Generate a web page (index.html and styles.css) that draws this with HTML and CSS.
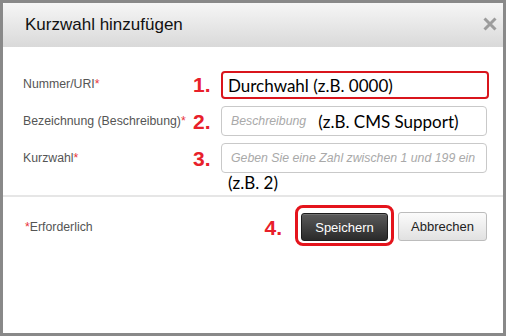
FILE: index.html
```html
<!DOCTYPE html>
<html lang="de">
<head>
<meta charset="utf-8">
<title>Kurzwahl hinzufügen</title>
<link rel="stylesheet" href="styles.css">
</head>
<body>
<div class="dialog">
  <div class="header">
    <span class="title">Kurzwahl hinzufügen</span>
    <svg class="close" width="14" height="14" viewBox="0 0 14 14"><path d="M1.5 1.5 L12.5 12.5 M12.5 1.5 L1.5 12.5" stroke="#9c9c9c" stroke-width="3" fill="none"/></svg>
  </div>
  <div class="form">
    <div class="label">Nummer/URI<span class="req">*</span></div>
    <div class="num">1.</div>
    <div class="field field-hl"><span class="note">Durchwahl (z.B. 0000)</span></div>

    <div class="label">Bezeichnung (Beschreibung)<span class="req">*</span></div>
    <div class="num">2.</div>
    <div class="field"><span class="ph">Beschreibung</span><span class="note note-in">(z.B. CMS Support)</span></div>

    <div class="label">Kurzwahl<span class="req">*</span></div>
    <div class="num">3.</div>
    <div class="field"><span class="ph">Geben Sie eine Zahl zwischen 1 und 199 ein</span></div>

    <div class="hint note">(z.B. 2)</div>
  </div>
  <div class="sep"></div>
  <div class="footer">
    <div class="required"><span class="req">*</span>Erforderlich</div>
    <div class="actions">
      <span class="num">4.</span>
      <span class="hl-box"><button class="btn btn-dark">Speichern</button></span>
      <button class="btn btn-light">Abbrechen</button>
    </div>
  </div>
</div>
</body>
</html>
```

FILE: styles.css
```css
html, body {
  margin: 0;
  padding: 0;
}
body {
  width: 506px;
  height: 336px;
  font-family: "Liberation Sans", Arial, sans-serif;
}
.dialog {
  box-sizing: border-box;
  width: 506px;
  height: 336px;
  border: 3px solid #898989;
  background: #fff;
  display: flex;
  flex-direction: column;
}
.header {
  height: 44px;
  flex: none;
  display: flex;
  align-items: center;
  justify-content: space-between;
  padding: 0 6px 0 22px;
  background: linear-gradient(#f6f6f6, #d9d9d9);
  border-top-left-radius: 3px;
}
.title {
  font-size: 17px;
  color: #111;
}
.close {
  display: block;
  margin-top: -2px;
}
.form {
  display: grid;
  grid-template-columns: 170px 28px 268px;
  grid-template-rows: 30px 30px 30px 20px;
  row-gap: 7px;
  padding: 22px 0 0 20px;
}
.label {
  align-self: center;
  font-size: 12.3px;
  color: #555;
  white-space: nowrap;
}
.req {
  color: #e8333a;
}
.num {
  align-self: center;
  font-size: 21px;
  font-weight: bold;
  color: #e8202a;
  line-height: 1;
}
.field {
  box-sizing: border-box;
  width: 266px;
  height: 30px;
  border: 1px solid #c9c9c9;
  border-radius: 4px;
  display: flex;
  align-items: center;
  padding-left: 9px;
}
.field-hl {
  width: 268px;
  height: 28px;
  align-self: end;
  border: 2px solid #d9151c;
  padding-left: 5px;
}
.ph {
  font-size: 12.3px;
  font-style: italic;
  color: #a9a9a9;
  white-space: nowrap;
}
.note {
  font-family: Lato, "Open Sans", sans-serif;
  font-size: 17px;
  color: #000;
  white-space: nowrap;
}
.note-in {
  margin-left: 12px;
}
.hint {
  grid-column: 3;
  height: 20px;
  line-height: 20px;
  margin-top: -7px;
  padding-left: 7px;
}
.sep {
  height: 2px;
  flex: none;
  background: #e6e6e6;
  margin-top: -5px;
}
.footer {
  display: flex;
  align-items: center;
  justify-content: space-between;
  padding: 8px 16px 0 22px;
}
.required {
  font-size: 12.3px;
  color: #555;
  margin-top: 3px;
}
.actions {
  display: flex;
  align-items: center;
}
.actions .num {
  margin-right: 13px;
  margin-top: 3px;
}
.hl-box {
  display: block;
  border: 3px solid #e4141c;
  border-radius: 8px;
  padding: 5px 3px 2px 3px;
  margin-right: 4px;
}
.btn {
  display: block;
  box-sizing: border-box;
  height: 28px;
  font-family: "Liberation Sans", Arial, sans-serif;
  font-size: 13px;
  border-radius: 3px;
  padding: 0;
  margin: 0;
}
.btn-dark {
  width: 87px;
  color: #fff;
  background: linear-gradient(#5a5a5a, #2a2a2a);
  border: 1px solid #1c1c1c;
  box-shadow: inset 0 1px 0 rgba(255,255,255,0.15);
}
.btn-light {
  width: 89px;
  height: 29px;
  margin-top: 2px;
  color: #222;
  background: linear-gradient(#fbfbfb, #e1e1e1);
  border: 1px solid #bcbcbc;
}
```
